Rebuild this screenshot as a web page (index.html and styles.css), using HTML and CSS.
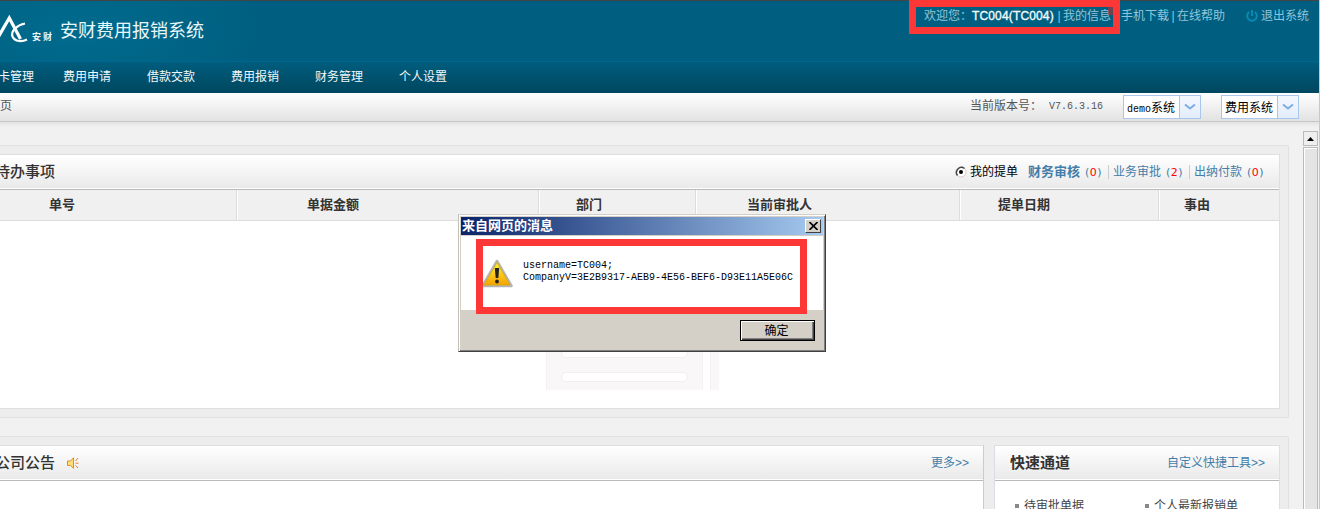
FILE: index.html
```html
<!DOCTYPE html>
<html lang="zh-CN">
<head>
<meta charset="utf-8">
<title>安财费用报销系统</title>
<link rel="stylesheet" href="styles.css">
</head>
<body>
<div class="page">
  <header class="top">
    <div class="brand">
      <svg class="logo" width="28" height="30" viewBox="0 0 28 30" fill="none" stroke="#fff">
        <path d="M-2 23.500L9.300 4L20.500 25" stroke-width="3.200"/>
        <path d="M25 9.500C17 11 10.500 17 12.500 22.500C15 28 22 28 27 25.500" stroke-width="2.200"/>
      </svg>
      <span class="logo-name">安财</span>
      <span class="sys-name">安财费用报销系统</span>
    </div>
    <div class="user">
      <span class="hello">欢迎您：</span><span class="uid">TC004(TC004)</span><span class="bar">|</span><a class="info">我的信息</a><a class="link">手机下载</a><span class="bar">|</span><a class="link">在线帮助</a>
      <svg class="power" width="12" height="12" viewBox="0 0 12 12" fill="none" stroke="#0789b5" stroke-width="2"><path d="M3.200 2A4.800 4.800 0 1 0 8.800 2M6 0V6"/></svg>
      <a class="link">退出系统</a>
    </div>
  </header>
  <nav class="nav"><a>卡管理</a><a>费用申请</a><a>借款交款</a><a>费用报销</a><a>财务管理</a><a>个人设置</a></nav>
  <div class="crumbs">
    <span class="here">页</span>
    <span class="ver-label">当前版本号：</span>
    <span class="ver">V7.6.3.16</span>
    <div class="select"><span><i>demo</i>系统</span><em><svg width="12" height="6" viewBox="0 0 12 6" fill="none" stroke="#7daee2" stroke-width="2"><path d="M1 0.500L6 4.500L11 0.500"/></svg></em></div>
    <div class="select second"><span>费用系统</span><em><svg width="12" height="6" viewBox="0 0 12 6" fill="none" stroke="#7daee2" stroke-width="2"><path d="M1 0.500L6 4.500L11 0.500"/></svg></em></div>
  </div>
  <div class="main">
    <div class="content">
      <section class="outer todo">
        <div class="card">
          <div class="head">
            <h2>待办事项</h2>
            <div class="filters">
              <svg class="radio" width="12" height="12" viewBox="0 0 12 12"><circle cx="6" cy="6" r="5" fill="#fff" stroke="#d4d0c8"/><path d="M2.500 9.500A5 5 0 0 1 9.500 2.500" fill="none" stroke="#444" stroke-width="1.500"/><circle cx="6" cy="6" r="2" fill="#000"/></svg>
              <span class="mine">我的提单</span>
              <a class="f1"><b>财务审核</b><u>(<s>0</s>)</u></a>
              <a class="f2">业务审批<u>(<s>2</s>)</u></a>
              <a class="f3">出纳付款<u>(<s>0</s>)</u></a>
            </div>
          </div>
          <div class="thead"><span class="c1">单号</span><span class="c2">单据金额</span><span class="c3">部门</span><span class="c4">当前审批人</span><span class="c5">提单日期</span><span class="c6">事由</span></div>
          <div class="empty"><div class="sheet"><i></i><i></i></div><div class="edge"></div></div>
        </div>
      </section>
      <section class="outer lower">
        <div class="card news">
          <div class="head"><h2>公司公告</h2>
            <svg class="horn" width="12" height="12" viewBox="0 0 12 12"><path d="M0.500 4H3.500L6.500 0.800V11.200L3.500 8.500H0.500Z" fill="#ffdf7a" stroke="#e58a22"/><path d="M8.500 4L11 1M8.500 6.200H11.500M8.500 8.500L11 11" stroke="#ed7f2a" fill="none"/></svg>
            <a class="more">更多&gt;&gt;</a></div>
        </div>
        <div class="card quick">
          <div class="head"><h2>快速通道</h2><a class="custom">自定义快捷工具&gt;&gt;</a></div>
          <ul><li>待审批单据</li><li>个人最新报销单</li></ul>
        </div>
      </section>
    </div>
    <div class="scroll"><div class="up"><svg width="7" height="4" viewBox="0 0 7 4"><path d="M3.500 0L7 4H0Z"/></svg></div><div class="thumb"></div></div>
  </div>
  <div class="badge"></div>
  <div class="mark mark-user"></div>
  <div class="dialog">
    <div class="title"><span>来自网页的消息</span><button class="close"><svg width="9" height="8" viewBox="0 0 9 8" stroke="#000" stroke-width="1.600"><path d="M0.500 0L8.500 8M8.500 0L0.500 8"/></svg></button></div>
    <div class="message">
      <svg class="warn" width="32" height="30" viewBox="0 0 32 30">
        <defs><linearGradient id="amber" x1="0" y1="0" x2="0" y2="1"><stop offset="0" stop-color="#fff23a"/><stop offset="1" stop-color="#f6a300"/></linearGradient></defs>
        <path d="M15 2L29.500 27H0.500Z" fill="#aaa" stroke="#b4b4b4" stroke-width="2.600" stroke-linejoin="round"/>
        <path d="M15 3.500L28 26H2Z" fill="url(#amber)" stroke="#dba800" stroke-width="0.800"/>
        <path d="M12.800 9H17.200L16.300 19H13.700Z" fill="#222"/><circle cx="15" cy="22.500" r="1.900" fill="#222"/>
      </svg>
      <p>username=TC004;<br>CompanyV=3E2B9317-AEB9-4E56-BEF6-D93E11A5E06C</p>
    </div>
    <div class="actions"><button class="ok">确定</button></div>
  </div>
  <div class="mark mark-msg"></div>
</div>
</body>
</html>
```
FILE: styles.css
```css
* { box-sizing: border-box; }
body { margin: 0; overflow: hidden; background: #fff; font: 12px/16px "Liberation Sans", "Noto Sans CJK SC", sans-serif; color: #444; }
h2, p, ul { margin: 0; padding: 0; }
i, em { font-style: normal; }
u, s { text-decoration: none; }
a, span, b, h2 { white-space: nowrap; }
.page { position: relative; width: 1320px; height: 509px; overflow: hidden; background: #f1f1f1; border-right: 1px solid #c8c8c8; display: flex; flex-direction: column; }

.top { flex: none; height: 61px; border-top: 1px solid #444; background: radial-gradient(ellipse 190px 80px at 75px 30px, #006b8e, #005f80); display: flex; justify-content: space-between; }
.brand { display: flex; color: #e9f7fb; }
.logo { margin-top: 13px; }
.logo-name { margin: 28px 0 0 4px; width: 28px; font: bold 9px/16px "Noto Sans CJK SC", sans-serif; letter-spacing: 2px; }
.sys-name { font-family: "Noto Sans CJK SC", sans-serif; font-size: 18px; line-height: 24px; margin-top: 16px; font-weight: 400; }
.user { display: flex; padding: 7px 10px 0 0; color: #8fc6dc; }
.hello { width: 48px; }
.uid { width: 83px; color: #f2fbfd; letter-spacing: 0.15px; -webkit-text-stroke: 0.35px #f2fbfd; }
.bar { width: 8px; text-align: center; }
.info { width: 58px; }
.link { width: 48px; }
.power { margin: 2px 3px 0 21px; }
.badge { position: absolute; left: 1108px; top: 7px; width: 6px; height: 8px; background: rgba(160, 55, 65, 0.7); }

.nav { flex: none; height: 32px; border-top: 1px solid #006890; background: linear-gradient(#005d7d, #00475f); color: #f0f8fa; display: flex; padding-top: 7px; margin: 0; }
.nav a { width: 84px; }
.nav a:first-child { width: 65px; margin-left: -2px; }

.crumbs { flex: none; height: 29px; border-bottom: 1px solid #c8c8c8; background: linear-gradient(#fff, #e2e2e2); display: flex; padding-top: 2px; color: #555; }
.here, .ver-label, .ver { margin-top: 3px; }
.here { width: 970px; }
.ver-label { width: 79px; }
.ver { margin-top: 4px; width: 74px; font-family: "Liberation Mono", monospace; font-size: 10px; }
.select { width: 78px; height: 24px; border: 1px solid #a9c7ea; background: #fff; color: #000; display: flex; }
.select span { flex: 1; padding: 4px 0 0 3px; }
.select i { font: 10px "Liberation Mono", monospace; }
.select em { width: 21px; border-left: 1px solid #a9c7ea; background: linear-gradient(#f4f8fe, #e2edfa); display: flex; align-items: center; justify-content: center; }
.second { margin-left: 20px; }

.main { flex: 1; min-height: 0; display: flex; background: linear-gradient(#e2e2e2, #f1f1f1 5px); }
.content { width: 1289px; padding-top: 23px; }
.outer { background: #ededed; border: solid #e0e0e0; border-width: 1px 1px 1px 0; padding: 8px 8px 8px 0; border-radius: 0 2px 2px 0; }
.todo { height: 273px; }
.lower { margin-top: 18px; height: 100px; display: flex; justify-content: space-between; }
.card { background: #fff; border: solid #dfdfdf; border-width: 1px 1px 1px 0; }
.todo .card { height: 255px; }
.head { height: 35px; border-bottom: 1px solid #b9b9b9; box-shadow: inset 0 -1px #fff; background: linear-gradient(#fff, #e9e9e9); display: flex; align-items: center; }
h2 { font-size: 15px; line-height: 20px; color: #333; font-weight: bold; }
.todo h2, .news h2 { margin-left: -5px; font-weight: 500; }
.filters { margin-left: auto; display: flex; align-items: center; color: #437da9; padding-right: 15px; }
.radio { margin-right: 3px; }
.mine { width: 58px; color: #000; }
.filters b { font-size: 13px; }
.filters u { font: 11px "DejaVu Sans", sans-serif; letter-spacing: 0.5px; }
.filters s { color: #f00; }
.filters a { display: flex; align-items: center; justify-content: space-between; line-height: 14px; }
.f1 { width: 74px; }
.f2, .f3 { width: 75px; margin-left: 6px; padding-left: 4px; border-left: 1px solid #ccc; }
.thead { display: flex; height: 31px; background: #f0f0f0; border-bottom: 1px solid #ddd; font-size: 13px; line-height: 30px; font-weight: bold; color: #333; }
.thead span { border-right: 1px solid #ddd; box-shadow: 1px 0 #fff; }
.thead .c1 { width: 237px; padding-left: 49px; }
.thead .c2 { width: 302px; padding-left: 70px; }
.thead .c3 { width: 157px; padding-left: 37px; }
.thead .c4 { width: 264px; padding-left: 51px; }
.thead .c5 { width: 199px; padding-left: 38px; }
.thead .c6 { width: 120px; padding-left: 25px; border: 0; box-shadow: none; }
.empty { display: flex; height: 169px; padding-left: 546px; gap: 7px; }
.sheet { width: 157px; background: #f9f7f8; border: solid #f3f1f2; border-width: 0 1px; display: flex; flex-direction: column; justify-content: flex-end; align-items: center; gap: 14px; padding-bottom: 8px; }
.sheet i { width: 127px; height: 10px; border-radius: 5px; background: #fff; border: 1px solid #f0eeef; }
.edge { width: 9px; background: #f9f7f8; border-left: 1px solid #f3f1f2; }
.news { width: 984px; border-right-color: #ccc; }
.horn { margin-left: 12px; }
.more { margin: 0 14px 0 auto; color: #437da9; }
.quick { width: 286px; border-left: 1px solid #dcdce4; }
.quick h2 { margin-left: 15px; }
.custom { margin: 0 14px 0 auto; color: #437da9; }
.quick ul { display: flex; list-style: none; padding: 17px 0 0 20px; }
.quick li { width: 130px; display: flex; align-items: center; gap: 5px; white-space: nowrap; }
.quick li::before { content: ""; width: 4px; height: 4px; background: #888; }
.scroll { margin: 9px 0 0 14px; width: 15px; }
.up { height: 15px; border: 1px solid #bbb; background: #eee; display: flex; align-items: center; justify-content: center; }
.thumb { margin-top: 1px; height: 400px; border: 1px solid #bbb; box-shadow: inset 1px 1px #fff; background: #e4e4e4; }

/* highlight frames laid over the page */
.mark { position: absolute; border: 7px solid #fc3736; }
.mark-user { left: 909px; top: 0; width: 211px; height: 34px; }
.mark-msg { left: 476px; top: 239px; width: 331px; height: 75px; }

.dialog { position: absolute; left: 458px; top: 214px; width: 368px; height: 138px; background: #d4d0c8; border: 1px solid; border-color: #d4d0c8 #404040 #404040 #c4c0b8; box-shadow: inset 1px 1px #fff, inset -1px -1px #808080; padding: 2px; }
.title { height: 18px; background: linear-gradient(90deg, #0a246a, #a6caf0); color: #fff; font-weight: bold; font-size: 13px; line-height: 18px; display: flex; justify-content: space-between; align-items: center; padding: 0 2px 0 1px; }
.close { width: 16px; height: 14px; padding: 0; background: #d4d0c8; border: 1px solid; border-color: #fff #404040 #404040 #fff; display: flex; align-items: center; justify-content: center; }
.message { margin-top: 1px; height: 74px; background: #fff; display: flex; padding: 23px 0 0 21px; }
.message p { margin: 1px 0 0 9px; font: 10px/12px "Liberation Mono", monospace; color: #000; white-space: nowrap; }
.actions { display: flex; justify-content: flex-end; padding: 10px 8px 0 0; }
.ok { width: 75px; height: 21px; padding: 0 2px 2px 0; background: #d4d0c8; border: 1px solid #000; box-shadow: inset 1px 1px #fff, inset -1px -1px #404040, inset -2px -2px #808080; font: 12px/16px "Noto Sans CJK SC", sans-serif; }
```
